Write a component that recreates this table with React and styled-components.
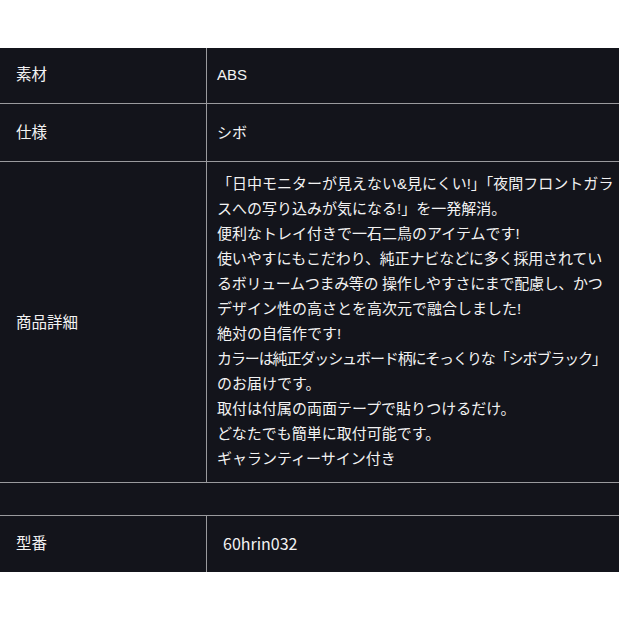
import React from "react";
import styled, { createGlobalStyle } from "styled-components";

const GlobalStyle = createGlobalStyle`
    html, body {
        margin: 0;
        padding: 0;
        background: #fff;
    }
    body {
        font-family: "Liberation Sans", "Noto Sans CJK JP", sans-serif;
    }
`;

// tight = letter-spacing for lines the original font sets narrower
const details = [
    { text: "「日中モニターが見えない&見にくい!」「夜間フロントガラ" },
    { text: "スへの写り込みが気になる!」を一発解消。" },
    { text: "便利なトレイ付きで一石二鳥のアイテムです!" },
    { text: "使いやすにもこだわり、純正ナビなどに多く採用されてい", tight: -0.15 },
    { text: "るボリュームつまみ等の 操作しやすさにまで配慮し、かつ", tight: -0.3 },
    { text: "デザイン性の高さとを高次元で融合しました!" },
    { text: "絶対の自信作です!" },
    { text: "カラーは純正ダッシュボード柄にそっくりな「シボブラック」", tight: -1.1 },
    { text: "のお届けです。" },
    { text: "取付は付属の両面テープで貼りつけるだけ。" },
    { text: "どなたでも簡単に取付可能です。" },
    { text: "ギャランティーサイン付き" },
];

const App = () => {
    return (
        <>
            <GlobalStyle />
            <Spec>
                <Row $first>
                    <Label $pad="14px 16px 16px">素材</Label>
                    <Value $pad="14px 10px 16px">ABS</Value>
                </Row>
                <Row>
                    <Label $pad="16px 16px">仕様</Label>
                    <Value $pad="16px 10px">シボ</Value>
                </Row>
                <Row>
                    <Label $pad="10px 16px">商品詳細</Label>
                    <Value $pad="9px 10px 11px">
                        {details.map((line, i) => (
                            <Line key={i} $tight={line.tight}>{line.text}</Line>
                        ))}
                    </Value>
                </Row>
                <Row>
                    <Blank />
                </Row>
                <Row>
                    <Label $pad="15px 16px 16px">型番</Label>
                    <Value $pad="15px 16px 16px" $code>60hrin032</Value>
                </Row>
            </Spec>
        </>
    );
};

const Spec = styled.div`
    margin-top: 48px;
    background: #13141b;
    color: #f2f2f2;
    font-size: 15px;
    line-height: 25px;
`;

const Row = styled.div`
    display: grid;
    grid-template-columns: 207px 1fr;
    border-top: ${({ $first }) => ($first ? "none" : "1px solid #9a9a9e")};
`;

const Label = styled.div`
    display: flex;
    align-items: center;
    padding: ${({ $pad }) => $pad};
    border-right: 1px solid #9a9a9e;
    font-size: 15.5px;
`;

const Value = styled.div`
    padding: ${({ $pad }) => $pad};
    font-family: ${({ $code }) =>
        $code
            ? `"Noto Sans CJK JP", sans-serif`
            : `"Liberation Sans", "Noto Sans CJK JP", sans-serif`};
    font-size: ${({ $code }) => ($code ? "16px" : "15px")};
`;

const Line = styled.div`
    white-space: nowrap;
    letter-spacing: ${({ $tight }) => ($tight ? `${$tight}px` : "normal")};
`;

const Blank = styled.div`
    grid-column: 1 / -1;
    height: 32px;
`;

export default App;
